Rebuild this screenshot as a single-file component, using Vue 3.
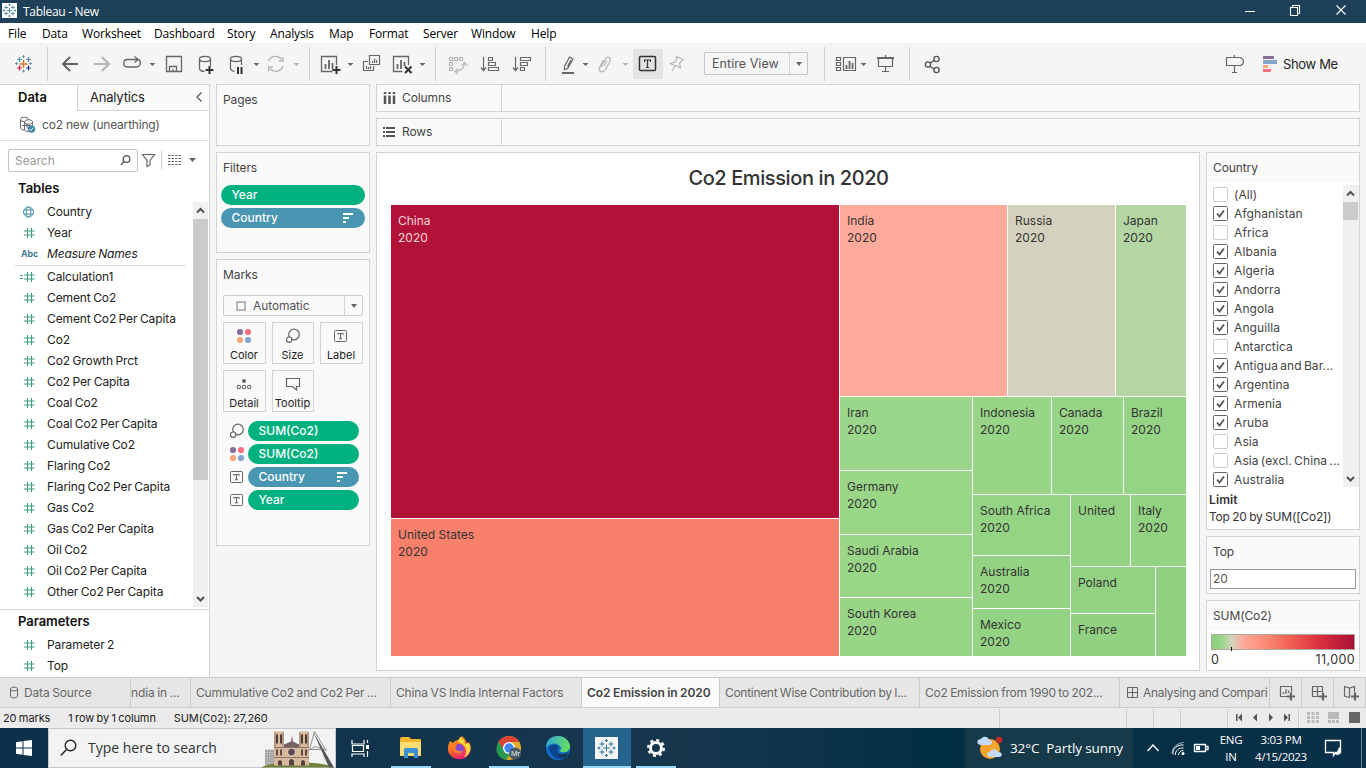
<script setup>
const menus = ['File', 'Data', 'Worksheet', 'Dashboard', 'Story', 'Analysis', 'Map', 'Format', 'Server', 'Window', 'Help']
const measures = ['Calculation1', 'Cement Co2', 'Cement Co2 Per Capita', 'Co2', 'Co2 Growth Prct', 'Co2 Per Capita', 'Coal Co2', 'Coal Co2 Per Capita', 'Cumulative Co2', 'Flaring Co2', 'Flaring Co2 Per Capita', 'Gas Co2', 'Gas Co2 Per Capita', 'Oil Co2', 'Oil Co2 Per Capita', 'Other Co2 Per Capita']
const countries = [['(All)', 0], ['Afghanistan', 1], ['Africa', 0], ['Albania', 1], ['Algeria', 1], ['Andorra', 1], ['Angola', 1], ['Anguilla', 1], ['Antarctica', 0], ['Antigua and Bar...', 1], ['Argentina', 1], ['Armenia', 1], ['Aruba', 1], ['Asia', 0], ['Asia (excl. China ...', 0], ['Australia', 1]]
const markPills = [['size', 'SUM(Co2)'], ['color', 'SUM(Co2)'], ['label', 'Country'], ['label', 'Year']]
const buttons = [['color', 'Color'], ['size', 'Size'], ['label', 'Label'], ['detail', 'Detail'], ['tooltip', 'Tooltip']]

// name, left, top, right, bottom, colour, rows of text
const cells = [
  ['China', 0, 0, 449, 314, '#b31238', 2],
  ['United States', 0, 314, 449, 452, '#f9816b', 2],
  ['India', 449, 0, 617, 192, '#ffaa9a', 2],
  ['Russia', 617, 0, 725, 192, '#d4d2bf', 2],
  ['Japan', 725, 0, 796, 192, '#b3d6a3', 2],
  ['Iran', 449, 192, 582, 266, '#9bd78b', 2],
  ['Germany', 449, 266, 582, 330, '#99d688', 2],
  ['Saudi Arabia', 449, 330, 582, 393, '#99d688', 2],
  ['South Korea', 449, 393, 582, 452, '#98d587', 2],
  ['Indonesia', 582, 192, 661, 290, '#98d587', 2],
  ['Canada', 661, 192, 733, 290, '#97d586', 2],
  ['Brazil', 733, 192, 796, 290, '#96d485', 2],
  ['South Africa', 582, 290, 680, 351, '#96d485', 2],
  ['Australia', 582, 351, 680, 404, '#95d384', 2],
  ['Mexico', 582, 404, 680, 452, '#95d384', 2],
  ['United', 680, 290, 740, 362, '#94d283', 1],
  ['Italy', 740, 290, 796, 362, '#94d283', 2],
  ['Poland', 680, 362, 765, 409, '#94d283', 1],
  ['France', 680, 409, 765, 452, '#93d182', 1],
  ['', 765, 362, 796, 452, '#93d182', 0],
]
const xs = [...new Set(cells.flatMap(c => [c[1], c[3]]))].sort((a, b) => a - b)
const ys = [...new Set(cells.flatMap(c => [c[2], c[4]]))].sort((a, b) => a - b)
const tracks = v => v.slice(1).map((n, i) => n - v[i] + 'px').join(' ')
const mapStyle = { gridTemplateColumns: tracks(xs), gridTemplateRows: tracks(ys) }
const place = c => ({
  gridColumn: `${xs.indexOf(c[1]) + 1} / ${xs.indexOf(c[3]) + 1}`,
  gridRow: `${ys.indexOf(c[2]) + 1} / ${ys.indexOf(c[4]) + 1}`,
  background: c[5],
})
</script>

<template>
  <div class="app">
    <svg class="defs" width="0" height="0">
      <defs>
        <symbol id="i-hash" viewBox="0 0 17 12"><path d="M7.5 1v10M11.5 1v10M4 4h10.5M4 8h10.500" stroke="#3f9f7f" stroke-width="1.1" fill="none" /></symbol>
        <symbol id="i-size" viewBox="0 0 18 18"><g fill="#fafafa" stroke="#666" stroke-width="1.2"><circle cx="10" cy="7.5" r="5.3" /><circle cx="5.2" cy="12.7" r="2.7" /></g></symbol>
        <symbol id="i-color" viewBox="0 0 18 18"><circle cx="5" cy="5" r="3.1" fill="#85719b" /><circle cx="13" cy="5" r="3.1" fill="#f8707f" /><circle cx="5" cy="13" r="3.1" fill="#f5a878" /><circle cx="13" cy="13" r="3.1" fill="#84a5cd" /></symbol>
        <symbol id="i-label" viewBox="0 0 18 18"><rect x="2.5" y="3.5" width="12" height="11" rx="1" fill="none" stroke="#666" /><path d="M6 7.8V6.5h5v1.3M8.5 6.5v5.2M7 11.7h3" fill="none" stroke="#666" stroke-width="1.1" /></symbol>
        <symbol id="i-detail" viewBox="0 0 18 18"><circle cx="9" cy="6" r="2" fill="#666" /><g fill="none" stroke="#666" stroke-width="1.1"><circle cx="3.8" cy="12" r="1.7" /><circle cx="9" cy="12" r="1.7" /><circle cx="14.2" cy="12" r="1.7" /></g></symbol>
        <symbol id="i-tooltip" viewBox="0 0 18 18"><path d="M2.5 3.5h13v8h-3v3.5l-4-3.5h-6z" fill="none" stroke="#666" stroke-width="1.2" /></symbol>
        <symbol id="i-sort" viewBox="0 0 11 10"><path d="M0 1h10M0 5h6M0 9h3" stroke="#fff" stroke-width="2" /></symbol>
        <symbol id="i-up" viewBox="0 0 15 17"><path d="M4 10.5L7.5 7l3.5 3.5" stroke="#505050" stroke-width="2" fill="none" /></symbol>
        <symbol id="i-down" viewBox="0 0 15 17"><path d="M4 7l3.5 3.5L11 7" stroke="#505050" stroke-width="2" fill="none" /></symbol>
        <symbol id="i-tableau" viewBox="0 0 20 20"><path d="M10 6.5v7M6.5 10h7M5.5 3.5v5M3 6h5M14.5 3.5v5M12 6h5M5.5 11.5v5M3 14h5M14.5 11.5v5M12 14h5M10 1v3M8.5 2.5h3M10 16v3M8.5 17.5h3M1 10h3M2.5 8.500v3M16 10h3M17.5 8.500v3" stroke="#2b7099" stroke-width="1" fill="none" /></symbol>
      </defs>
    </svg>

    <header class="titlebar">
      <svg class="applogo" width="15" height="15"><rect width="15" height="15" fill="#fff" /><use href="#i-tableau" width="15" height="15" /></svg>
      <span class="apptitle">Tableau - New</span>
      <svg class="winbtns" width="126" height="23" viewBox="1240 1 126 23" fill="none" stroke="#fff" stroke-width="1.1"><path d="M1245 12.500h10M1336.500 6.500l9 9M1345.500 6.500l-9 9" /><path d="M1290.500 8.500h7v8h-7zM1292.500 8V6.500h7v8h-2" /></svg>
    </header>

    <nav class="menubar"><span v-for="m in menus" :key="m">{{ m }}</span></nav>

    <div class="toolbar">
      <svg width="47" height="41" viewBox="0 43 47 41" fill="none" stroke-width="1.2">
        <path d="M23.500 60v8M19.500 64h8" stroke="#e8762c" stroke-width="1.5" />
        <path d="M19.500 57v5M17 59.500h5" stroke="#5c9aab" /><path d="M28.500 57v5M26 59.500h5" stroke="#5b7fb0" />
        <path d="M19.500 65.500v5M17 68h5" stroke="#c72037" /><path d="M28.500 65.500v5M26 68h5" stroke="#1f447e" />
        <path d="M23.500 55v3M22 56.500h3M23.500 69.500v3M22 71h3M15 63.500h3M16.500 62v3M29 63.500h3M30.500 62v3" stroke="#7294b5" stroke-width="1" />
      </svg>
      <svg class="sep" width="262" height="41" viewBox="47 43 262 41" fill="none" stroke="#666" stroke-width="1.3">
        <path d="M78 64H63M70 57l-7 7 7 7" stroke-width="2" />
        <path d="M94 64h15M102 57l7 7-7 7" stroke="#b5b5b5" stroke-width="2" />
        <path d="M132 59.500h-4.500c-5 0-5 7.500 0 7.500h8c5.500 0 6-6 3-7.500h-6.500M134.500 56.500l3.500 3-3.500 3" />
        <path d="M149.500 63h6l-3 3z" fill="#666" stroke="none" />
        <path d="M166.500 56.500h15v15h-15zM169.500 71v-4.500h7V71M173 69v3" />
        <path d="M199.500 59v10c1 2 3 2.500 5 2.500M210.500 59v7M199.500 59c0-3.500 11-3.500 11 0s-11 3.500-11 0z" />
        <path d="M209.500 66v8M205.500 70h8" stroke="#333" stroke-width="2" />
        <path d="M230.500 59v10c1 2 2 2.500 4 2.500M241.500 59v6M230.500 59c0-3.500 11-3.500 11 0s-11 3.500-11 0z" />
        <path d="M238 67v7M241.500 67v7" stroke="#333" stroke-width="2" />
        <path d="M253.500 63h6l-3 3z" fill="#666" stroke="none" />
        <g stroke="#b5b5b5"><path d="M268.500 61a7.500 7.500 0 0 1 13-1.500M283 66a7.500 7.500 0 0 1-13 2.500M279 61h4v-4M273 67h-4.500v4.500" /></g>
        <path d="M293.500 63h6l-3 3z" fill="#b5b5b5" stroke="none" />
      </svg>
      <svg class="sep" width="126" height="41" viewBox="309 43 126 41" fill="none" stroke="#666" stroke-width="1.3">
        <path d="M336.500 65v-8.500h-15v15h11" /><path d="M325.500 69v-5M329 69v-9M332.500 69v-6" stroke-width="1.8" />
        <path d="M336.500 66v8M332.500 70h8" stroke="#333" stroke-width="2" /><path d="M347.500 63h6l-3 3z" fill="#666" stroke="none" />
        <path d="M369.500 55.500h10v9h-10zM368 61.500h-4.500v9h10V66M372.500 63v-2M374.500 63v-4.500M376.500 63v-3M366.500 69v-3M368.500 69v-2M370.500 69v-3" stroke-width="1.2" />
        <path d="M408.500 65v-8.500h-15v15h9" /><path d="M397.500 69v-5M401 69v-9M404.500 66v-4" stroke-width="1.800" />
        <path d="M405 66.500l6.500 6.500M411.500 66.500L405 73" stroke="#333" stroke-width="2" /><path d="M419.500 63h6l-3 3z" fill="#666" stroke="none" />
      </svg>
      <svg class="sep" width="110" height="41" viewBox="435 43 110 41" fill="none" stroke="#666" stroke-width="1.2">
        <path d="M449.500 57.500h3v3h-3zM454.500 57.500h3v3h-3zM459.500 57.500h3v3h-3zM449.500 62.500h3v3h-3zM449.500 67.500h3v3h-3zM464.500 63c0 5-3 7.500-8.500 8.500M461.500 65.500l3-3 3 3M458 68.500l-3 3 3 2.500" stroke="#b5b5b5" />
        <path d="M483.500 57v13M481 67.500l2.500 3 2.500-3M488.500 57.500h4v3h-4zM488.500 62.500h7v3h-7zM488.500 67.500h10v3h-10z" />
        <path d="M515.500 57v13M513 67.500l2.500 3 2.500-3M520.500 57.500h10v3h-10zM520.500 62.500h7v3h-7zM520.500 67.500h4v3h-4z" />
      </svg>
      <svg class="sep" width="158" height="41" viewBox="545 43 158 41" fill="none" stroke="#666" stroke-width="1.2">
        <path d="M564.500 66.500l5-9.500 3.500 2-5 9-3.500 1.500zM567.500 66.500l3.500-6.500" /><path d="M562 73h12" stroke-width="2" /><path d="M582.500 63h6l-3 3z" fill="#666" stroke="none" />
        <path d="M601 67l4.500-8c2-3.500 6.500-1 4.500 2.500l-4.500 8c-3 4.500-8 1.500-5.500-3l3.500-6.500M604 66l3-5.500" stroke="#b5b5b5" /><path d="M622.500 63h6l-3 3z" fill="#b5b5b5" stroke="none" />
        <rect x="633" y="49" width="30" height="30" fill="#e3e3e3" stroke="none" /><rect x="639.500" y="56.500" width="16" height="14" rx="1" stroke="#333" stroke-width="1.500" /><path d="M644.500 62v-2h6v2M647.500 60v7.500M646 67.500h3" stroke="#333" />
        <path d="M676.500 56.500l6.500 3-1.500 1.500-2 2.500 1 4.500-4-2-4.500-1.500-1.500-1 4.500-1.500 2-3.500zM675 66l-3 5" stroke="#b5b5b5" />
      </svg>
      <div class="select"><span>Entire View</span><i></i></div>
      <svg class="sep view" width="85" height="41" viewBox="824 43 85 41" fill="none" stroke="#666" stroke-width="1.2">
        <path d="M836.500 57.500h4v3h-4zM836.500 62.500h4v3h-4zM836.500 67.500h4v3h-4zM843.500 57.500h12v13h-12z" /><path d="M846.500 69v-4M849.500 69v-8M852.500 69v-6" stroke-width="1.800" /><path d="M860.500 63h6l-3 3z" fill="#666" stroke="none" />
        <path d="M877 58h17" stroke-width="2" /><path d="M878.500 59v7.500h14V59M885.500 66v5M882 71.500h7M885.500 55v2" />
      </svg>
      <svg class="sep" width="60" height="41" viewBox="909 43 60 41" fill="none" stroke="#555" stroke-width="1.4"><circle cx="928" cy="64.500" r="2.600" /><circle cx="936.500" cy="59" r="2.600" /><circle cx="936.500" cy="70" r="2.600" /><path d="M930.500 63l3.500-2.500M930 66.500l4 2.500" /></svg>
      <svg class="guide" width="60" height="41" viewBox="1222 43 60 41" fill="none" stroke="#666" stroke-width="1.200"><path d="M1226.500 57.500h14q3 1.500 3 4t-3 4h-14zM1234.500 55v3M1234.500 66v6.500M1232 72.500h5" /><g stroke="none"><path fill="#85719b" d="M1263 56h11v3h-11z" /><path fill="#84a5cd" d="M1263 60h14v4h-14z" /><path fill="#f5a878" d="M1263 65h5v3h-5z" /><path fill="#f8707f" d="M1263 69h8v3h-8z" /></g></svg>
      <span class="showme">Show Me</span>
    </div>

    <main class="work">
      <aside class="side">
        <div class="sidetabs"><b>Data</b><span>Analytics</span><svg width="8" height="10"><path d="M6.500.5L2 5l4.500 4.500" fill="none" stroke="#555" stroke-width="1.200" /></svg></div>
        <div class="source">
          <svg width="18" height="18" fill="none" stroke="#666" stroke-width="1"><path d="M1.500 3.500v8c0 2 2 2.500 4 2.500M1.500 3.500c0-3 8-3 8 0M1.500 3.500c0 1.500 2 2 3.500 2M5.500 6v7c0 2 2 2.500 4 2.500M13.500 6v3M5.500 6c0-3 8-3 8 0s-8 3-8 0zM3 9.500h8M8 7.500v5" /><circle cx="12.500" cy="13" r="3.700" fill="#3d84a3" stroke="none" /><path d="M10.500 13l1.500 1.500 2.500-3" stroke="#fff" /></svg>
          <span>co2 new (unearthing)</span>
        </div>
        <div class="searchrow">
          <div class="search"><span>Search</span><svg width="11" height="11" fill="none" stroke="#555" stroke-width="1.300"><circle cx="6.500" cy="4" r="3.300" /><path d="M4.300 6.500L.8 10" /></svg></div>
          <svg width="62" height="22" viewBox="141 149 62 22" fill="none" stroke="#666" stroke-width="1.200"><path d="M142.500 154.500h12l-4.500 6v4.500l-3 1.500v-6z" /><path d="M161.500 151v18" stroke="#d4d4d4" /><path d="M168 155.500h13M168 158.500h13M168 161.500h13M168 164.500h13" stroke-dasharray="2.500 1" /><path d="M189 158h7l-3.500 4z" fill="#666" stroke="none" /></svg>
        </div>
        <h3>Tables</h3>
        <div class="tables">
          <div class="fields">
            <div class="field"><svg width="17" height="12" fill="none" stroke="#4591ad"><circle cx="8.500" cy="6" r="5" /><ellipse cx="8.500" cy="6" rx="2.300" ry="5" /><path d="M4 4h9M4 8h9" /></svg>Country</div>
            <div class="field"><svg width="17" height="12"><use href="#i-hash" /></svg>Year</div>
            <div class="field names"><small>Abc</small><em>Measure Names</em></div>
            <hr>
            <div v-for="(m, i) in measures" :key="m" class="field"><svg width="17" height="12"><use href="#i-hash" /><path v-if="!i" d="M0 4.500h3M0 7.500h3" stroke="#3f9f7f" /></svg>{{ m }}</div>
          </div>
          <div class="scroll"><svg width="15" height="17"><use href="#i-up" /></svg><i></i><svg width="15" height="17"><use href="#i-down" /></svg></div>
        </div>
        <div class="params">
          <h3>Parameters</h3>
          <div v-for="p in ['Parameter 2', 'Top']" :key="p" class="field"><svg width="17" height="12"><use href="#i-hash" /></svg>{{ p }}</div>
        </div>
      </aside>

      <section class="cards">
        <div class="card pages"><h4>Pages</h4></div>
        <div class="card filters">
          <h4>Filters</h4>
          <div class="pill">Year</div>
          <div class="pill blue">Country<svg width="11" height="10"><use href="#i-sort" /></svg></div>
        </div>
        <div class="card marks">
          <h4>Marks</h4>
          <div class="marktype"><svg width="10" height="10"><rect x="1" y="1" width="8" height="8" fill="none" stroke="#999" stroke-width="1.400" /></svg><span>Automatic</span><i></i></div>
          <div class="markbtns"><div v-for="b in buttons" :key="b[1]"><svg width="18" height="18"><use :href="'#i-' + b[0]" /></svg><span>{{ b[1] }}</span></div></div>
          <div v-for="(p, i) in markPills" :key="i" class="markrow"><svg width="18" height="18"><use :href="'#i-' + p[0]" /></svg><div class="pill" :class="{ blue: i === 2 }">{{ p[1] }}<svg v-if="i === 2" width="11" height="10"><use href="#i-sort" /></svg></div></div>
        </div>
      </section>

      <section class="canvas">
        <div class="shelf"><div><svg width="13" height="13" stroke="#555" stroke-width="2.500" fill="none"><path d="M2 0v2M2 3.500V12M6.500 0v2M6.500 3.500V12M11 0v2M11 3.500V12" /></svg>Columns</div></div>
        <div class="shelf"><div><svg width="13" height="13" stroke="#555" stroke-width="2" fill="none"><path d="M0 2h2M3 2h9M0 6h2M3 6h9M0 10h2M3 10h9" /></svg>Rows</div></div>
        <div class="viewrow">
          <div class="sheet">
            <h1>Co2 Emission in 2020</h1>
            <div class="treemap" :style="mapStyle">
              <div v-for="(c, i) in cells" :key="i" class="cell" :class="{ dark: i === 0 }" :style="place(c)"><p v-if="c[6]">{{ c[0] }}</p><p v-if="c[6] > 1">2020</p></div>
            </div>
          </div>
          <div class="legends">
            <div class="card country">
              <h4>Country</h4>
              <div class="filterlist">
                <div class="checks">
                  <label v-for="c in countries" :key="c[0]"><svg width="15" height="15"><rect x=".5" y=".5" width="14" height="14" rx="1" fill="#fff" :stroke="c[1] ? '#666' : '#ccc'" /><path v-if="c[1]" d="M4 7.500l2.500 3L11 4.500" fill="none" stroke="#555" stroke-width="1.800" /></svg>{{ c[0] }}</label>
                </div>
                <div class="scroll"><svg width="15" height="17"><use href="#i-up" /></svg><i></i><svg width="15" height="17"><use href="#i-down" /></svg></div>
              </div>
              <div class="limit"><b>Limit</b><span>Top 20 by SUM([Co2])</span></div>
            </div>
            <div class="card top"><h4>Top</h4><div class="input">20</div></div>
            <div class="card sum"><h4>SUM(Co2)</h4><div class="ramp"><i></i></div><div class="ends"><span>0</span><span>11,000</span></div></div>
          </div>
        </div>
      </section>
    </main>

    <div class="tabs">
      <div class="tab t1"><svg width="10" height="13" fill="none" stroke="#666"><path d="M1.500 3v7c0 2.500 7 2.500 7 0V3c0-2.500-7-2.500-7 0s7 2.500 7 0" /></svg>Data Source</div>
      <div class="tab t2">ndia in ...</div>
      <div class="tab t3">Cummulative Co2 and Co2 Per ...</div>
      <div class="tab t4">China VS India Internal Factors</div>
      <div class="tab t5 active">Co2 Emission in 2020</div>
      <div class="tab t6">Continent Wise Contribution by I...</div>
      <div class="tab t7">Co2 Emission from 1990 to 202...</div>
      <div class="tab t8"><svg width="11" height="11" fill="none" stroke="#666"><path d="M.5.5h10v10H.5zM5.500.5v10M.5 5.500h10" /></svg>Analysing and Compari</div>
      <div class="tab tn"><svg width="16" height="16" fill="none" stroke="#666" stroke-width="1.200"><path d="M12.500 7V1.500h-11v10H8M4.500 9V7M7 9V4M9.500 8V5.500" /><path d="M12 7.500v8M8 11.500h8" stroke-width="2.200" /></svg></div>
      <div class="tab tn"><svg width="16" height="16" fill="none" stroke="#666" stroke-width="1.200"><path d="M11.500 7V1.500h-10v10H8M6.500 1.500v10M1.500 6.500h10" /><path d="M12 7.500v8M8 11.500h8" stroke-width="2.200" /></svg></div>
      <div class="tab tn"><svg width="16" height="16" fill="none" stroke="#666" stroke-width="1.200"><path d="M11.500 7V1.500L6.500 3l-5-1.500v9.500l5 1.500M6.500 3v9.500" /><path d="M12 7.500v8M8 11.500h8" stroke-width="2.200" /></svg></div>
    </div>

    <div class="status">
      <span>20 marks</span><span>1 row by 1 column</span><span>SUM(Co2): 27,260</span>
      <svg width="380" height="19" viewBox="986 709 380 19"><path d="M999.500 708v20M1126.500 708v20M1153.500 708v20M1180.500 708v20M1227.500 708v20M1298.500 708v20" stroke="#ccc" /><path d="M1236 714h1.500v7h-1.500zM1242 713.500v8l-4-4zM1257 713.500v8l-4-4zM1269 713.500v8l4-4zM1284 713.500v8l4-4zM1288.500 714h1.500v7h-1.500z" fill="#555" /><path d="M1307 712h3v3h-3zM1311.500 712h3v3h-3zM1316 712h3v3h-3zM1307 716h3v3h-3zM1311.500 716h3v3h-3zM1316 716h3v3h-3zM1307 720h3v3h-3zM1311.500 720h3v3h-3zM1316 720h3v3h-3zM1328 712h11v7h-11zM1328 720h3v3h-3zM1332 720h3v3h-3zM1336 720h3v3h-3z" fill="#bbb" /><path d="M1349 712h11v11h-11z" fill="#666" /></svg>
    </div>

    <footer class="taskbar">
      <svg class="start" width="48" height="40" viewBox="0 728 48 40"><path d="M16 742.200l6.500-1v6.300H16zM23.500 741l8.500-1v7.500h-8.500zM16 748.500h6.500v6.300l-6.500-1zM23.500 748.500H32v7.500l-8.500-1z" fill="#fff" /></svg>
      <div class="wsearch">
        <svg width="18" height="18" fill="none" stroke="#222" stroke-width="1.400"><circle cx="10.500" cy="6.500" r="5.300" /><path d="M6.500 10.500L.8 16.500" /></svg>
        <span>Type here to search</span>
        <svg class="scene" width="74" height="39" viewBox="261 729 74 38">
          <path d="M265 749h9v17h-9z" fill="#bbb" /><path d="M266 750v15M268.500 750v15M271 750v15M273 750v15" stroke="#777" stroke-width=".8" stroke-dasharray="1.500 1" />
          <path d="M261 767c12-7 60-7 73 0z" fill="#71813b" />
          <path d="M274 731h10v16h15v-16h10v34h-35z" fill="#d8b99d" /><path d="M275 732v14M283 732v14M300 732v14M308 732v14M274 747h35M274 757h35" stroke="#8e7462" />
          <path d="M277 734v9M281 734v9M302 734v9M306 734v9" stroke="#4c3b3b" stroke-width="2" /><path d="M284 744l7-3 1-6 1 6 6 3v3h-15z" fill="#756364" /><circle cx="291.500" cy="751.500" r="4" fill="#5b4b55" stroke="#eed6c1" />
          <path d="M278 765v-4q2-3 4 0v4zM289 765v-5q2.500-3 5 0v5zM301 765v-4q2-3 4 0v4z" fill="#514140" /><path d="M277 749v6M281 749v6M302 749v6M306 749v6" stroke="#5b4b48" stroke-width="2" />
          <path d="M313 731l21 36h-5z" fill="#555" /><path d="M314.500 731l-5 18h16z M307 751l8-5 12 4" fill="none" stroke="#777" stroke-width=".8" />
        </svg>
      </div>
      <svg class="apps" width="629" height="40" viewBox="336 728 629 40" fill="none">
        <path d="M352 740v4h12v-4M352 757v-3h12v3M352.500 745.500h11v6h-11zM367.500 740v3M367.500 751v6" stroke="#fff" stroke-width="1.200" /><path d="M366 745h3v4h-3z" fill="#fff" />
        <path d="M400 739q0-2 2-2h7l2 2h9q1 0 1 1v15q0 1-1 1h-19q-1 0-1-1z" fill="#f4b62a" /><path d="M400 742h21v13q0 1-1 1h-19q-1 0-1-1z" fill="#ffdc72" /><path d="M404 758v-8q0-2 2-2h10q2 0 2 2v8h-4v-5h-6v5z" fill="#398fd8" />
        <defs><linearGradient id="ff" x1="0" y1="0" x2=".5" y2="1"><stop stop-color="#ffb525" /><stop offset=".55" stop-color="#ff681f" /><stop offset="1" stop-color="#f22276" /></linearGradient><linearGradient id="ed" x1="0" y1="0" x2="1" y2=".2"><stop stop-color="#32a7dd" /><stop offset="1" stop-color="#64da65" /></linearGradient></defs>
        <path d="M450 741l3 2q2-3 5-3l4-4q4 3 5 7l2-1q3 6 1 10c-4 12-23 8-22-4 0-3 1-5 2-7z" fill="url(#ff)" /><path d="M460 737q5 2 5 7l4-1c4 7-1 13-5 14 4-5 3-12-6-15z" fill="#ffdb3d" /><circle cx="459" cy="749" r="5" fill="#8649d0" /><path d="M451 744q4 0 6 2l-2 2c2 4 6 4 8 2-1 6-11 5-12-6z" fill="#ff8125" />
        <circle cx="509" cy="748" r="12" fill="#e3ad25" /><path d="M498.500 742q4-6 10.500-6 7 0 10.500 6H509l-6 9z" fill="#db4437" /><path d="M498.500 742l6.500 9 5 3-4 6c-9-2-12-11-7.500-18z" fill="#2a9952" /><circle cx="509" cy="748" r="6" fill="#fff" /><circle cx="509" cy="748" r="4.700" fill="#4285f4" /><circle cx="515" cy="753.500" r="6" fill="#465b65" />
        <text x="511" y="756" font-size="7" fill="#fff" font-family="Open Sans, sans-serif">Mr</text>
        <circle cx="558" cy="748" r="12" fill="#126bc6" /><path d="M546 748c0-8 5-12 12-12 8 0 12 6 12 11 0 4-4 6-9 5-3-1 2-3-1-6-4-4-11-3-14 2z" fill="url(#ed)" /><path d="M549 747c5-5 11-1 9 2-3 4 3 8 8 5l1 1c-6 8-17 3-18-8z" fill="#0c418b" /><path d="M558 749c-3 5 4 7 10 3l-2 5c-6 1-11-3-8-8z" fill="#16344e" />
        <rect x="583" y="728" width="48" height="40" fill="#25638c" /><rect x="595" y="737" width="23" height="22" fill="#f5f5f5" /><use href="#i-tableau" x="596" y="738" width="21" height="20" />
        <path d="M391 766h40v2h-40zM489 766h40v2h-40zM583 766h48v2h-48zM636 766h40v2h-40z" fill="#9ad7f7" />
        <circle cx="656" cy="748" r="5.500" stroke="#fff" stroke-width="3" /><circle cx="656" cy="748" r="7.800" stroke="#fff" stroke-width="2.400" stroke-dasharray="3 3.126" />
      </svg>
      <div class="weather"><svg width="26" height="24"><circle cx="13" cy="13" r="10" fill="#f5a329" /><path d="M4 9c-5 0-5-6 0-6 2-4 8-2 8 1 4 0 4 5 0 5zM13 21c-4 0-4-5 0-5 2-4 7-3 8 0 5 0 5 5 1 5z" fill="#c2d9fa" /><circle cx="22" cy="4" r="3.200" fill="#c32c21" /></svg><span>32°C</span><span>Partly sunny</span></div>
      <svg class="tray" width="80" height="40" viewBox="1133 728 80 40" fill="none" stroke="#fff" stroke-width="1.300"><path d="M1147.500 751l5.500-6 5.500 6" /><g stroke-width="1"><path d="M1175.500 755c-.500-4.500 3.500-7.500 8-7M1178.500 755c0-2.500 2-4.500 5-4.500M1173 754.500c-1-5.500 4-10 10.500-9.500" /><path d="M1172 753c0-5 5-10 11.500-10.500" stroke="#9fb0b8" /></g><circle cx="1183" cy="753.500" r="1.500" fill="#fff" stroke="none" /><path d="M1194.500 744.500h11v7h-11zM1206 746.500h2v3h-2" /><path d="M1196 746h4v4h-4z" fill="#fff" stroke="none" /></svg>
      <div class="lang">ENG<br>IN</div>
      <div class="clock">3:03 PM<br>4/15/2023</div>
      <svg class="notes" width="50" height="40" viewBox="1316 728 50 40" fill="none" stroke="#fff" stroke-width="1.300"><path d="M1325.500 740.500h15v12h-5l-2 3v-3h-8z" /><path d="M1339 747c-2 4-1 6-5 6 3 4 8 1 7-3z" fill="#fff" stroke="none" /><path d="M1361.500 728v40" stroke="#73808a" stroke-width="1" /></svg>
    </footer>
  </div>
</template>

<style>
html, body { margin: 0; overflow: hidden; }
</style>

<style scoped>
* { box-sizing: border-box; }
.app { width: 1366px; height: 768px; display: flex; flex-direction: column; overflow: hidden; background: #f5f5f5; font: 12px/16px Inter, "Noto Sans", sans-serif; color: #333; white-space: nowrap; }
.defs { display: none; }
svg { flex: none; display: block; }
h1, h3, h4, p, hr { margin: 0; }
.titlebar { height: 23px; background: #1e4058; display: flex; align-items: center; color: #fff; }
.applogo { margin: -2px 6px 0 2px; }
.apptitle { font: 12px/16px "Open Sans", sans-serif; letter-spacing: -.3px; flex: 1; }
.menubar { height: 20px; flex: none; background: #fff; color: #000; display: grid; grid-template-columns: 34px 40px 72px 73px 43px 59px 40px 54px 48px 60px 40px; padding-left: 8px; font: 12px/21px "Open Sans", sans-serif; letter-spacing: -.15px; }
.toolbar { height: 41px; flex: none; display: flex; align-items: center; box-shadow: inset 0 1px #eee; }
.toolbar .sep { background: linear-gradient(#d0d0d0, #d0d0d0) 0 4px / 1px 34px no-repeat; }
.select { width: 104px; height: 23px; border: 1px solid #c4c4c4; border-radius: 2px; display: flex; align-items: center; font-size: 12.500px; color: #555; letter-spacing: .05px; margin-left: 1px; }
.select span { flex: 1; padding-left: 7px; }
.select i, .marktype i { width: 18px; height: 100%; border-left: 1px solid #d4d4d4; display: flex; align-items: center; justify-content: center; }
.select i::after, .marktype i::after { content: ""; border: 3.500px solid transparent; border-top: 4px solid #666; border-bottom: 0; }
.view { margin-left: 16px; }
.guide { margin-left: auto; }
.showme { width: 84px; padding-left: 1px; font-size: 13px; color: #222; letter-spacing: -.35px; }
.work { height: 593px; flex: none; display: flex; }
.side { width: 210px; background: #fff; border-right: 1px solid #d4d4d4; border-top: 1px solid #d4d4d4; display: flex; flex-direction: column; color: #222; flex: none; }
.sidetabs { display: flex; height: 26px; flex: none; align-items: stretch; line-height: 25px; font-size: 13px; position: relative; }
.sidetabs b { width: 77px; padding-left: 18px; color: #111; font-weight: 600; }
.sidetabs span { width: 132px; padding-left: 12px; border-left: 1px solid #d4d4d4; border-bottom: 1px solid #d4d4d4; background: #fafafa; letter-spacing: -.2px; }
.sidetabs svg { position: absolute; right: 6px; top: 7px; }
.source { height: 30px; flex: none; display: flex; align-items: center; padding: 0 0 1px 19px; gap: 5px; border-bottom: 1px solid #e0e0e0; color: #555; letter-spacing: -.2px; }
.searchrow { display: flex; padding: 8px 0 0 8px; gap: 3px; }
.search { width: 130px; height: 23px; border: 1px solid #c4c4c4; border-radius: 2px; display: flex; align-items: center; justify-content: space-between; padding: 0 6px; color: #999; }
h3 { font-size: 13px; line-height: 18px; font-weight: 600; color: #111; padding-left: 18px; margin-top: 7px; flex: none; }
.tables { display: flex; height: 407px; margin-top: 5px; flex: none; }
.fields { width: 193px; margin-top: -1px; }
.field { height: 21px; display: flex; align-items: center; padding-left: 20px; gap: 10px; letter-spacing: -.1px; word-spacing: -.8px; }
.names em { letter-spacing: -.15px; }
.fields hr { border: 0; height: 1px; margin: 0 7px 1px 15px; background: #d8d8d8; position: relative; top: 1px; }
.field small { width: 17px; font-size: 9px; font-weight: 600; color: #34728a; padding-left: 1px; }
.scroll { width: 15px; height: 405px; background: #f0f0f0; display: flex; flex-direction: column; }
.scroll i { height: 261px; background: #cbcbcb; }
.scroll svg:last-child { margin-top: auto; }
.params { border-top: 1px solid #d4d4d4; }
.params h3 { margin: 2px 0 4px; letter-spacing: -.05px; }
.cards { width: 154px; margin-left: 6px; display: flex; flex-direction: column; gap: 6px; flex: none; }
.card { background: #fafafa; border: 1px solid #d4d4d4; }
h4 { font-size: 12px; font-weight: 400; line-height: 16px; padding: 7px 6px 0; color: #444; letter-spacing: -.1px; }
.pages { height: 62px; }
.filters { height: 101px; padding: 0 4px; }
.filters h4 { padding-left: 2px; margin-bottom: 9px; }
.pill { height: 20px; border-radius: 10px; background: #00b180; color: #fff; line-height: 20px; padding: 0 11px 0 10.500px; display: flex; align-items: center; justify-content: space-between; margin-bottom: 3px; font-weight: 500; }
.pill.blue { background: #4996b2; }
.marks { height: 287px; padding: 0 6px; }
.marks h4 { padding-left: 0; }
.marktype { height: 21px; border: 1px solid #ccc; border-radius: 2px; margin-top: 12px; display: flex; align-items: center; padding-left: 12px; gap: 7px; color: #555; background: #fafafa; letter-spacing: -.1px; }
.marktype span { flex: 1; }
.markbtns { display: grid; grid-template-columns: 43px 42px 43px; gap: 6px; margin-top: 6px; font-size: 11px; color: #222; }
.markbtns > div { height: 42px; border: 1px solid #d4d4d4; display: flex; flex-direction: column; align-items: center; padding: 4px 1px 0 0; line-height: 21px; }
.markbtns + .markrow { margin-top: 9px; }
.markrow { display: flex; height: 23px; gap: 2px; padding-left: 5px; }
.markrow > svg { margin-top: 1px; }
.markrow .pill { width: 111px; }
.canvas { margin-left: 6px; display: flex; flex-direction: column; gap: 6px; width: 984px; }
.shelf { height: 28px; flex: none; background: #fafafa; border: 1px solid #d4d4d4; }
.shelf div { width: 125px; height: 26px; border-right: 1px solid #d4d4d4; display: flex; align-items: center; padding-left: 6px; gap: 6px; color: #444; letter-spacing: -.1px; }
.viewrow { display: flex; gap: 6px; height: 519px; }
.sheet { width: 824px; background: #fff; border: 1px solid #d4d4d4; padding: 11px 13px 12px; }
h1 { font-size: 20px; line-height: 28px; font-weight: 500; text-align: center; height: 40px; letter-spacing: -.4px; color: #333; padding-left: 1px; }
.treemap { display: grid; margin: 1px 0 0 1px; }
.cell { border-right: 1px solid #fff; border-bottom: 1px solid #fff; padding: 7px 0 0 7px; overflow: hidden; line-height: 17px; color: #333; min-width: 0; min-height: 0; }
.cell.dark { color: #f7d5dc; }
.legends { width: 154px; display: flex; flex-direction: column; gap: 6px; }
.country { height: 378px; background: #fff; }
.country h4, .top h4, .sum h4 { background: #fafafa; height: 29px; }
.filterlist { display: flex; justify-content: space-between; height: 305px; margin-top: 3px; }
.checks { width: 136px; }
.checks label { display: flex; align-items: center; gap: 6px; height: 19px; padding-left: 6px; letter-spacing: .1px; word-spacing: -1.300px; color: #444; }
.filterlist .scroll { height: 302px; width: 16px; }
.filterlist .scroll i { height: 18px; width: 15px; }
.limit { display: flex; flex-direction: column; padding: 1px 0 0 2px; line-height: 17px; }
.limit b { font-weight: 600; letter-spacing: .1px; }
.limit span { letter-spacing: -.2px; word-spacing: -.7px; }
.top { height: 58px; }
.top h4 { height: 32px; }
.input { margin: 0 3px; height: 20px; border: 1px solid #999; background: #fff; line-height: 18px; padding-left: 2px; color: #555; }
.sum { height: 71px; background: #fff; }
.ramp { height: 16px; margin: 4px 4px 0; border: 1px solid #a9a9a0; background: linear-gradient(90deg, #8ccd79 0, #9ad78a 7%, #d4d2bf 14%, #ffaa9a 22%, #f9816b 42%, #ee5a50 58%, #d9303d 76%, #ab1037 100%); padding: 12px 0 0 19px; }
.ramp i { display: block; width: 1px; height: 4px; background: #000; }
.ends { display: flex; justify-content: space-between; padding: 2px 4px; font-size: 12.500px; }
.ends span:last-child { letter-spacing: .4px; }
.tabs { height: 31px; flex: none; border-top: 1px solid #ccc; border-bottom: 1px solid #ccc; background: #e6e6e6; display: flex; letter-spacing: -.15px; word-spacing: -.5px; }
.tab { border-right: 1px solid #ccc; padding-left: 5px; line-height: 29px; overflow: hidden; color: #666; display: flex; align-items: center; flex: none; }
.t1 { width: 131px; padding-left: 9px; gap: 5px; }
.t2 { width: 60px; padding-left: 0; }
.t3 { width: 200px; }
.t4 { width: 191px; }
.t5 { width: 138px; }
.t6 { width: 200px; letter-spacing: -.3px; }
.t7 { width: 200px; letter-spacing: -.25px; }
.t8 { width: 150px; padding-left: 7px; gap: 5px; letter-spacing: -.3px; }
.tn { width: 32px; padding-left: 9px; }
.tab.active { background: #fafafa; font-weight: 600; color: #444; padding-bottom: 1px; letter-spacing: -.05px; }
.status { height: 20px; flex: none; background: #ebebeb; display: flex; align-items: center; padding-left: 3px; gap: 18px; font-size: 11px; color: #222; letter-spacing: -.1px; word-spacing: -.6px; }
.status svg { margin-left: auto; }
.taskbar { height: 40px; flex: none; background: linear-gradient(90deg, #0b314c, #17374d 50%, #032f43 68%, #093048); display: flex; color: #fff; font-family: "Open Sans", sans-serif; }
.wsearch { width: 288px; background: #f2f3f5; border: 1px solid #c5c9cc; display: flex; align-items: center; color: #333; font-size: 14px; padding-left: 11px; gap: 10px; }
.scene { margin-left: auto; }
.weather { width: 168px; background: #163a4a; display: flex; align-items: center; padding-left: 12px; font-size: 13.500px; gap: 7px; letter-spacing: -.1px; }
.lang, .clock { width: 36px; text-align: center; font-size: 11.500px; line-height: 17px; padding-top: 3px; letter-spacing: -.3px; }
.clock { width: 64px; }
.notes { margin-left: auto; }
</style>
